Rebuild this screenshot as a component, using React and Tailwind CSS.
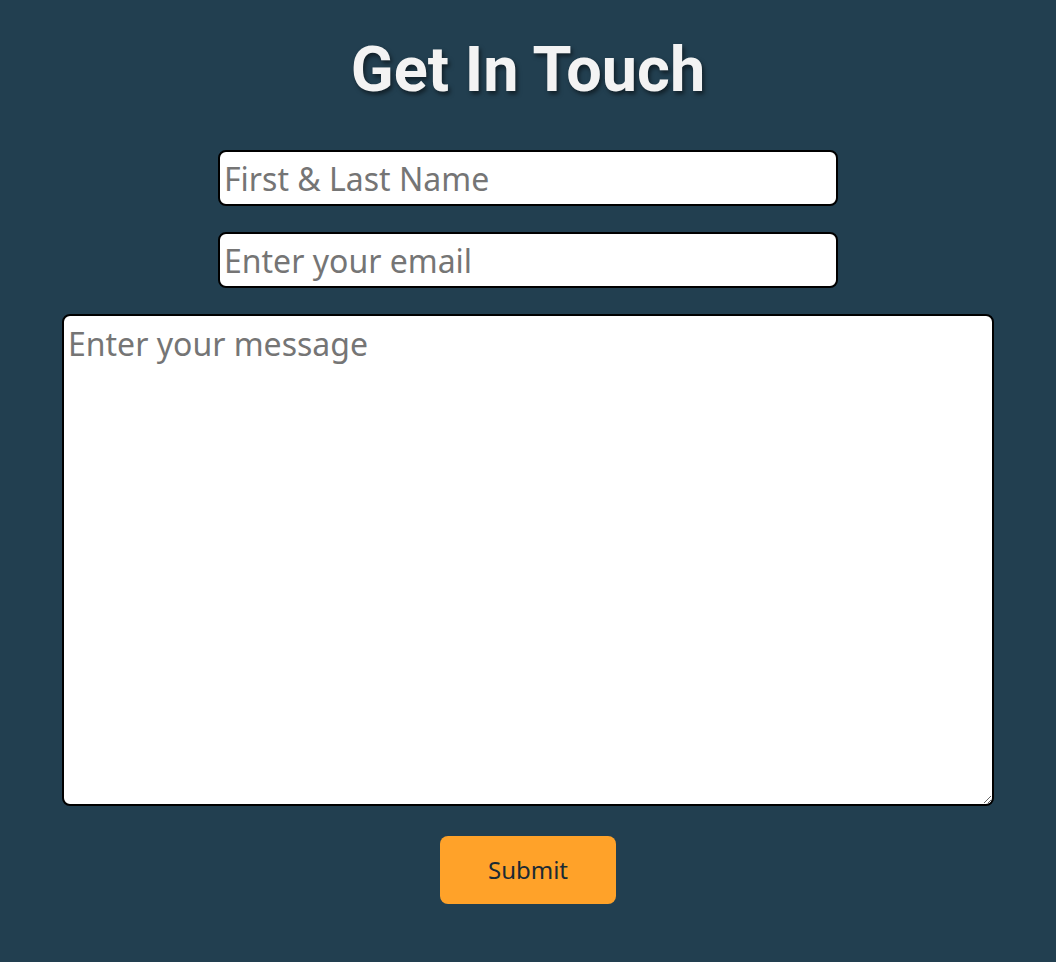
export default function App() {
  return (
    <div className="min-h-[962px] w-full bg-[#223f50] flex flex-col items-center pt-[30px] font-['Noto_Sans',sans-serif]">
      <h1 className="font-['Roboto',sans-serif] font-bold text-[63px] leading-[80px] text-[#f3f3f3] [text-shadow:2px_3px_4px_rgba(0,0,0,0.5)]">
        Get In Touch
      </h1>
      <form className="mt-[40px] flex flex-col items-center w-full">
        <input
          type="text"
          placeholder="First & Last Name"
          className="w-[620px] h-[56px] bg-white border-2 border-black rounded-[8px] px-1 text-[32px] text-black placeholder:text-[#757575] outline-none"
        />
        <input
          type="email"
          placeholder="Enter your email"
          className="mt-[26px] w-[620px] h-[56px] bg-white border-2 border-black rounded-[8px] px-1 text-[32px] text-black placeholder:text-[#757575] outline-none"
        />
        <textarea
          placeholder="Enter your message"
          className="mt-[26px] w-[932px] h-[492px] bg-white border-2 border-black rounded-[8px] px-1 pt-[6px] text-[32px] leading-[44px] text-black placeholder:text-[#757575] outline-none resize"
        />
        <button
          type="button"
          className="mt-[30px] w-[176px] h-[68px] bg-[#ffa229] rounded-[8px] text-[24px] text-[#1b2a33]"
        >
          Submit
        </button>
      </form>
    </div>
  );
}
